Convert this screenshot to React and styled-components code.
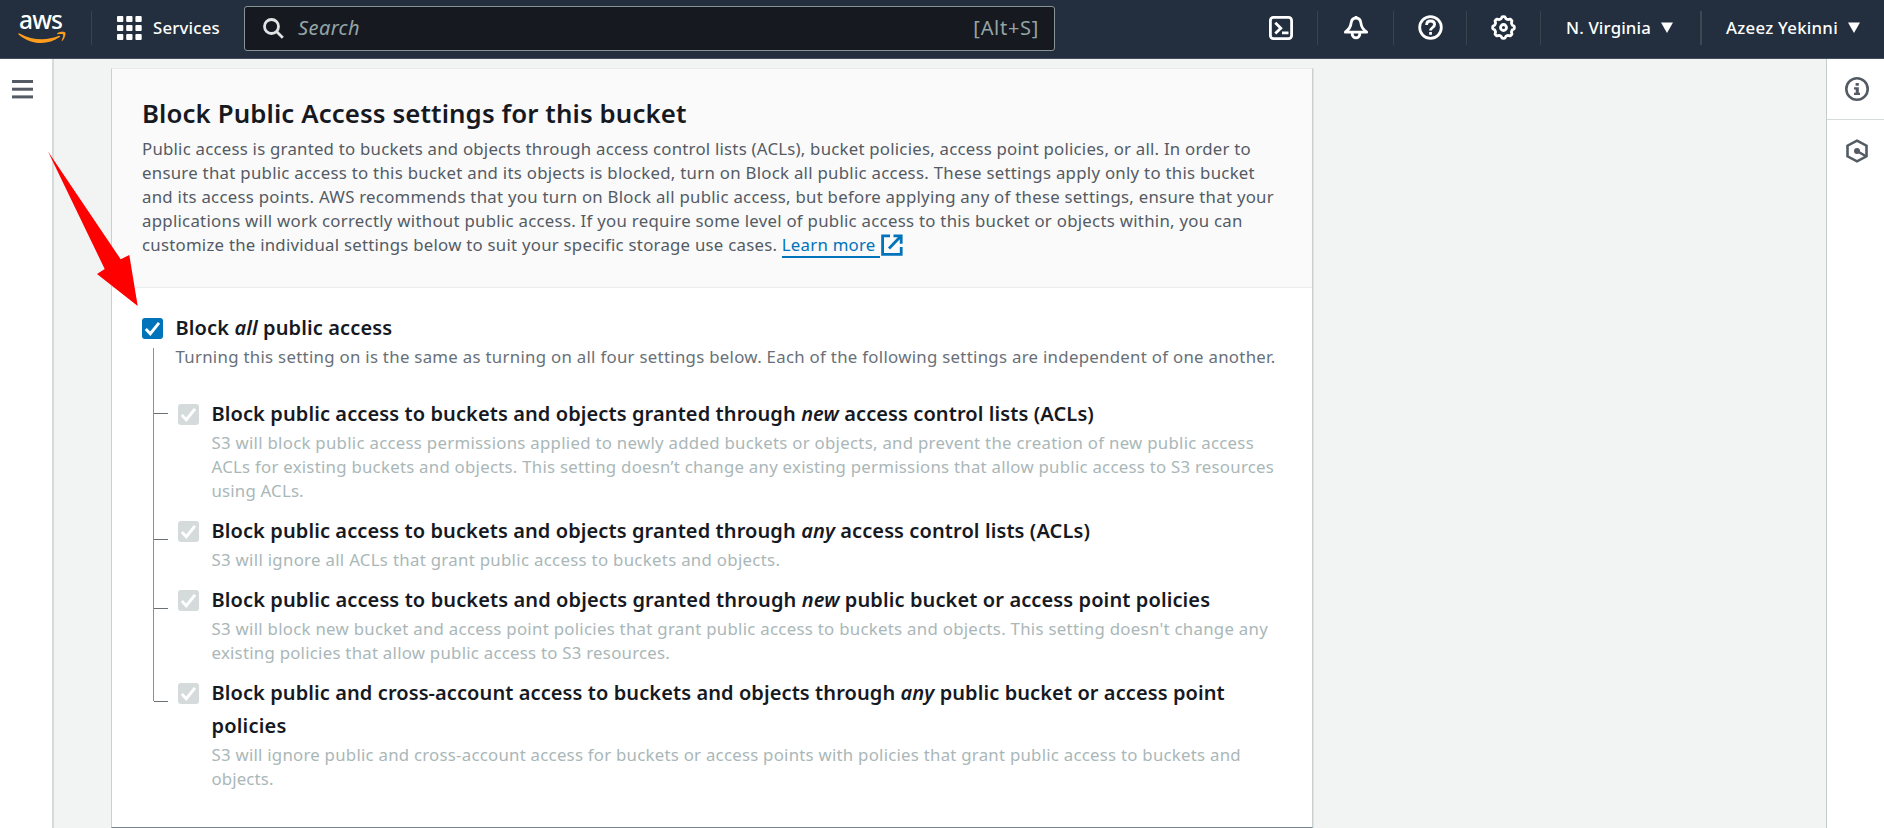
import React from "react";
import styled, { createGlobalStyle, css } from "styled-components";

const GlobalStyle = createGlobalStyle`
  * { box-sizing: border-box; }
  body { margin: 0; background: #f2f3f3; font-family: "Noto Sans", "Open Sans", sans-serif; color: #16191f; }
  svg { display: block; flex: none; }
`;

const Page = styled.div`
  display: flex;
  flex-direction: column;
  height: 828px;
  overflow: hidden;
  position: relative;
`;

/* top navigation */
const TopNav = styled.header`
  display: flex;
  align-items: center;
  flex: none;
  height: 59px;
  padding-bottom: 3px;
  background: #232f3e;
  border-bottom: 1px solid #414d5c;
  color: #fff;
`;
const LogoLink = styled.div`
  width: 91px;
  margin-top: -10px;
  padding-left: 17px;
`;
const Divider = styled.div`
  flex: none;
  width: ${(p) => (p.$wide ? 2 : 1)}px;
  height: 34px;
  background: ${(p) => (p.$wide ? "#414750" : "#39434b")};
`;
const ServicesButton = styled.div`
  display: flex;
  align-items: center;
  gap: 11px;
  width: 152px;
  padding-left: 25px;
`;
const NavText = styled.span`
  font-size: 16.8px;
  font-weight: 500;
  line-height: 24px;
  letter-spacing: ${(p) => p.$track || 0}px;
  white-space: nowrap;
`;
const SearchBox = styled.div`
  display: flex;
  align-items: center;
  width: 811px;
  height: 45px;
  margin-top: 2px;
  padding: 0 15px 0 18px;
  background: #161920;
  border: 1px solid #879596;
  border-radius: 3px;
  color: #95a5a6;
  font-size: 20px;
`;
const Placeholder = styled.span`
  flex: 1;
  padding: 0 0 2px 14px;
  font-style: italic;
  letter-spacing: 0.4px;
`;
const Shortcut = styled.span`
  padding-bottom: 2px;
  letter-spacing: 0.7px;
`;
const NavActions = styled.nav`
  display: flex;
  align-items: center;
  margin-left: auto;
`;
const IconButton = styled.div`
  display: flex;
  justify-content: center;
  width: ${(p) => p.$width}px;
`;
const NavMenu = styled.div`
  display: flex;
  align-items: center;
  gap: 10.5px;
  width: ${(p) => p.$width}px;
  padding-left: ${(p) => p.$pad}px;
`;

/* body */
const Body = styled.div`
  display: flex;
  flex: 1;
  min-height: 0;
`;
const SideRail = styled.aside`
  flex: none;
  width: 54px;
  padding: 21px 0 0 12px;
  background: #fff;
  border-right: 2px solid #d5dada;
`;
const ToolRail = styled.aside`
  flex: none;
  width: 58px;
  margin-left: auto;
  background: #fff;
  border-left: 1px solid #c6cccc;
`;
const Tool = styled.div`
  display: flex;
  align-items: center;
  justify-content: center;
  height: 61px;
  padding-left: 2px;
  border-bottom: ${(p) => (p.$last ? "none" : "1px solid #d5dbdb")};
`;
const Card = styled.section`
  display: flex;
  flex-direction: column;
  width: 1202px;
  margin: 9px 0 0 57px;
  background: #fff;
  border: 1px solid #cad0d0;
  border-top-color: #e8ebeb;
  border-bottom-color: #7b878c;
  box-shadow: 1px 0 0 #dfe3e3;
`;
const CardHeader = styled.div`
  padding: 28px 30px 30px;
  background: #fafafa;
  border-bottom: 1px solid #eaeded;
`;
const Title = styled.h2`
  margin: 0 0 8px;
  font-size: 25.8px;
  line-height: 32px;
  font-weight: 600;
  letter-spacing: 0.11px;
  white-space: nowrap;
`;
const toneColors = { body: "#545b64", help: "#687078", muted: "#aab7b8" };
const Line = styled.div`
  height: 24px;
  line-height: 24px;
  font-size: 16.8px;
  white-space: nowrap;
  letter-spacing: ${(p) => p.$track || 0.22}px;
  color: ${(p) => toneColors[p.$tone || "body"]};
`;
const LearnMore = styled.a`
  color: #0073bb;
  display: inline-block;
  height: 25px;
  padding-right: 4px;
  border-bottom: 2px solid #0073bb;
  vertical-align: top;
  line-height: 24px;
`;
const ExternalIcon = styled.svg`
  display: inline-block;
  vertical-align: top;
  margin: 1px 0 0 1px;
`;
const CardBody = styled.div`
  flex: 1;
  padding: 23px 30px 0;
`;
const Setting = styled.div`
  display: flex;
  align-items: flex-start;
  gap: 12.5px;
  position: relative;
  margin-bottom: ${(p) => p.$gap}px;
  ${(p) =>
    p.$tick &&
    css`
      &::before {
        content: "";
        position: absolute;
        left: -24px;
        top: ${p.$tick}px;
        width: 14px;
        height: 1px;
        background: #687078;
      }
    `}
`;
const SubSettings = styled.div`
  position: relative;
  padding-left: 36px;
  &::before {
    content: "";
    position: absolute;
    left: 11px;
    top: -49px;
    width: 1px;
    height: 353px;
    background: #879196;
  }
`;
const Checkbox = styled.span`
  display: flex;
  align-items: center;
  justify-content: center;
  flex: none;
  width: 21px;
  height: 21px;
  margin-top: 7px;
  border-radius: 3px;
  background: ${(p) => (p.$disabled ? "#d5dbdb" : "#0073bb")};
`;
const Label = styled.div`
  height: 33px;
  line-height: 33px;
  font-size: 20px;
  font-weight: 600;
  white-space: nowrap;
  letter-spacing: ${(p) => p.$track || 0.1}px;
`;
const Help = styled.div`
  padding-top: 1px;
`;
const RedArrow = styled.svg`
  position: absolute;
  left: 40px;
  top: 145px;
`;

const AwsLogo = () => (
  <svg width="52" height="44" viewBox="0 -8 52 44">
    <text x="2" y="19.5" fontSize="24.5" textLength="44" fill="#fff" fontFamily="Noto Sans, sans-serif" fontWeight="500">aws</text>
    <path d="M1.3 24.6c.5-.6 1.1-.3 1.8.1 6.900 3.900 14.200 5.600 21.600 5.600 6 0 12-1.200 17.300-3.500.9-.4 1.600.6.7 1.300-5.200 3.900-12.300 5.900-18.400 5.900-8.700 0-16.700-3.200-22.700-8.600-.3-.3-.5-.6-.3-.8z" fill="#ff9d1c" />
    <path d="M40.300 24.300c2.800-2 7.400-1.800 8-.9.6.8-.2 6-2.900 8.300-.5.4-.9.100-.7-.4.7-1.600 2-5.100 1.400-5.900-.6-.8-4-.4-5.600-.2-.5.1-.6-.5-.2-.9z" fill="#ff9d1c" />
  </svg>
);
const GridIcon = () => (
  <svg width="25" height="24" viewBox="0 0 25 24" fill="#fff">
    {[0, 9, 18].map((y) => [0, 9.2, 18.4].map((x) => <rect key={`${x}-${y}`} x={x} y={y} width="6.3" height="6" rx="1" />))}
  </svg>
);
const SearchIcon = () => (
  <svg width="21" height="21" viewBox="0 0 21 21" fill="none" stroke="#dfe5e5" strokeWidth="2.8">
    <circle cx="8.5" cy="8.5" r="7" />
    <path d="M13.5 13.5l6.300 6.300" />
  </svg>
);
const Caret = () => (
  <svg width="12" height="11" viewBox="0 0 12 11"><path d="M0 .5h12L6 11z" fill="#fff" /></svg>
);
const TerminalIcon = () => (
  <svg width="24" height="24" viewBox="0 0 24 24" fill="none" stroke="#fff" strokeWidth="2.8">
    <rect x="1.4" y="1.4" width="21.2" height="21.2" rx="3" />
    <path d="M6.300 6.800l5.500 5.400-5.500 5.400M13 16.800h6.500" />
  </svg>
);
const BellIcon = () => (
  <svg width="26" height="25" viewBox="0 0 26 25" fill="none" stroke="#fff" strokeWidth="2.8" strokeLinejoin="round">
    <path d="M13 1v2M13 3C9.500 3 8.300 5.500 8 8.500c-.3 3.500-1.500 5.500-5.700 8.700h21.400c-4.200-3.200-5.400-5.200-5.700-8.700C17.700 5.500 16.500 3 13 3z" />
    <path d="M9.200 18v1a3.800 3.800 0 0 0 7.600 0v-1" />
  </svg>
);
const HelpIcon = () => (
  <svg width="25" height="25" viewBox="0 0 25 25" fill="none" stroke="#fff" strokeWidth="2.8">
    <circle cx="12.5" cy="12.5" r="10.8" />
    <path d="M8.600 9.900c0-2.400 1.600-3.900 4-3.900s4 1.400 4 3.500c0 3-4 3-4 6.100" />
    <path d="M11.200 18.400h2.700" />
  </svg>
);
const gearPoints = Array.from({ length: 96 }, (_, i) => {
  const a = (i / 96) * Math.PI * 2;
  const r = 9.9 + 0.95 * Math.tanh(2.2 * Math.cos(8 * a));
  return `${(12.5 + r * Math.cos(a)).toFixed(2)},${(12.5 + r * Math.sin(a)).toFixed(2)}`;
}).join(" ");
const GearIcon = () => (
  <svg width="25" height="25" viewBox="0 0 25 25" fill="none" stroke="#fff" strokeWidth="2.8" strokeLinejoin="round">
    <polygon points={gearPoints} />
    <circle cx="12.5" cy="12.5" r="3" />
  </svg>
);
const MenuIcon = () => (
  <svg width="21" height="19" viewBox="0 0 21 19" fill="#545b64">
    <rect width="21" height="3" /><rect y="7.7" width="21" height="3" /><rect y="15.4" width="21" height="3" />
  </svg>
);
const InfoIcon = () => (
  <svg width="24" height="24" viewBox="0 0 24 24" fill="#545b64">
    <circle cx="12" cy="12" r="10.7" fill="none" stroke="#545b64" strokeWidth="2.6" />
    <path d="M10.600 6h3.200v2.800h-3.200zM9 10.200h4.800v5.600H15V18H9v-2.200h1.700v-3.400H9z" />
  </svg>
);
const HexIcon = () => (
  <svg width="24" height="24" viewBox="0 0 24 24" fill="none" stroke="#545b64" strokeWidth="2.6">
    <path d="M12 1.700l9.500 5v10.600l-9.500 5-9.500-5V6.700z" />
    <circle cx="12" cy="12" r="3" fill="#545b64" stroke="none" />
    <path d="M12 12l8.500 5" />
  </svg>
);
const CheckMark = () => (
  <svg width="21" height="21" viewBox="0 0 21 21" fill="none" stroke="#fff" strokeWidth="2.9">
    <path d="M3.800 11l4.500 4.700L17 4.800" />
  </svg>
);

const Check = ({ disabled }) => (
  <Checkbox $disabled={disabled}><CheckMark /></Checkbox>
);

const settings = [
  {
    tick: 16, gap: 11,
    labels: [[0.1, <>Block public access to buckets and objects granted through <em>new</em> access control lists (ACLs)</>]],
    help: [
      [0.283, "S3 will block public access permissions applied to newly added buckets or objects, and prevent the creation of new public access"],
      [0.26, "ACLs for existing buckets and objects. This setting doesn’t change any existing permissions that allow public access to S3 resources"],
      [0.2, "using ACLs."],
    ],
  },
  {
    tick: 25, gap: 11,
    labels: [[0.1, <>Block public access to buckets and objects granted through <em>any</em> access control lists (ACLs)</>]],
    help: [[0.31, "S3 will ignore all ACLs that grant public access to buckets and objects."]],
  },
  {
    tick: 25, gap: 11,
    labels: [[0.11, <>Block public access to buckets and objects granted through <em>new</em> public bucket or access point policies</>]],
    help: [
      [0.288, "S3 will block new bucket and access point policies that grant public access to buckets and objects. This setting doesn't change any"],
      [0.257, "existing policies that allow public access to S3 resources."],
    ],
  },
  {
    tick: 25, gap: 0,
    labels: [
      [0.09, <>Block public and cross-account access to buckets and objects through <em>any</em> public bucket or access point</>],
      [0.2, "policies"],
    ],
    help: [
      [0.253, "S3 will ignore public and cross-account access for buckets or access points with policies that grant public access to buckets and"],
      [0.15, "objects."],
    ],
  },
];

export default function App() {
  return (
    <Page>
      <GlobalStyle />
      <TopNav>
        <LogoLink><AwsLogo /></LogoLink>
        <Divider />
        <ServicesButton><GridIcon /><NavText $track={0.2}>Services</NavText></ServicesButton>
        <SearchBox>
          <SearchIcon />
          <Placeholder>Search</Placeholder>
          <Shortcut>[Alt+S]</Shortcut>
        </SearchBox>
        <NavActions>
          <IconButton $width={73}><TerminalIcon /></IconButton>
          <Divider />
          <IconButton $width={75}><BellIcon /></IconButton>
          <Divider />
          <IconButton $width={72}><HelpIcon /></IconButton>
          <Divider />
          <IconButton $width={73}><GearIcon /></IconButton>
          <Divider />
          <NavMenu $width={159} $pad={25}><NavText $track={0.15}>N. Virginia</NavText><Caret /></NavMenu>
          <Divider $wide />
          <NavMenu $width={182} $pad={24}><NavText $track={0.26}>Azeez Yekinni</NavText><Caret /></NavMenu>
        </NavActions>
      </TopNav>
      <Body>
        <SideRail><MenuIcon /></SideRail>
        <Card>
          <CardHeader>
            <Title>Block Public Access settings for this bucket</Title>
            <Line $track={0.231}>Public access is granted to buckets and objects through access control lists (ACLs), bucket policies, access point policies, or all. In order to</Line>
            <Line $track={0.279}>ensure that public access to this bucket and its objects is blocked, turn on Block all public access. These settings apply only to this bucket</Line>
            <Line $track={0.266}>and its access points. AWS recommends that you turn on Block all public access, but before applying any of these settings, ensure that your</Line>
            <Line $track={0.277}>applications will work correctly without public access. If you require some level of public access to this bucket or objects within, you can</Line>
            <Line $track={0.25}>
              customize the individual settings below to suit your specific storage use cases. <LearnMore>Learn more</LearnMore>
              <ExternalIcon width="22" height="22" viewBox="0 0 22 22" fill="none" stroke="#0073bb" strokeWidth="2.8">
                <path d="M9 1.800H1.600v18.600h18.600V13M12.500 1.800h7.700v8M20 2L8 14.500" />
              </ExternalIcon>
            </Line>
          </CardHeader>
          <CardBody>
            <Setting $gap={28}>
              <Check />
              <div>
                <Label $track={0.12}>Block <em>all</em> public access</Label>
                <Help>
                  <Line $tone="help" $track={0.298}>Turning this setting on is the same as turning on all four settings below. Each of the following settings are independent of one another.</Line>
                </Help>
              </div>
            </Setting>
            <SubSettings>
              {settings.map((s, i) => (
                <Setting key={i} $gap={s.gap} $tick={s.tick}>
                  <Check disabled />
                  <div>
                    {s.labels.map(([track, text], j) => <Label key={j} $track={track}>{text}</Label>)}
                    <Help>
                      {s.help.map(([track, text]) => <Line key={text} $tone="muted" $track={track}>{text}</Line>)}
                    </Help>
                  </div>
                </Setting>
              ))}
            </SubSettings>
          </CardBody>
        </Card>
        <ToolRail>
          <Tool><InfoIcon /></Tool>
          <Tool $last><HexIcon /></Tool>
        </ToolRail>
      </Body>
      <RedArrow width="100" height="165" viewBox="40 145 100 165" fill="#f00">
        <path d="M48 151.500L120.700 259.300l8.600-4.300 8.400 51L97 274l7.700-5z" />
      </RedArrow>
    </Page>
  );
}
